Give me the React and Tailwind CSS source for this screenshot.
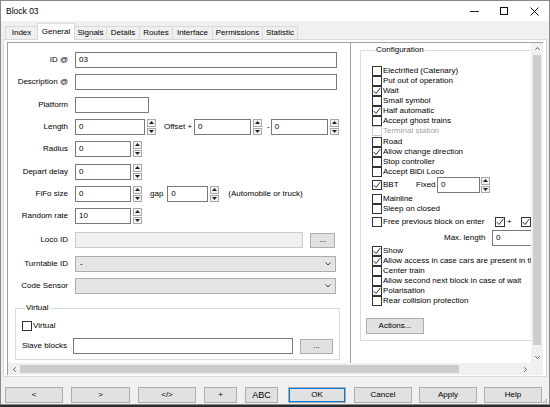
import React from "react";

function Check({ on = false, dis = false }) {
  return (
    <span
      className={
        "flex h-[10px] w-[10px] shrink-0 items-center justify-center border bg-white " +
        (dis ? "border-[#cccccc]" : "border-[#333333]")
      }
    >
      {on && (
        <svg width="8" height="8" viewBox="0 0 8 8">
          <path d="M0.8 4.1 L3 6.5 L7.2 1.1" fill="none" stroke="#1a1a1a" strokeWidth="0.9" />
        </svg>
      )}
    </span>
  );
}

function Spin({ className = "" }) {
  return (
    <div className={"flex h-[16px] w-[9px] shrink-0 flex-col gap-[1px] " + className}>
      <div className="flex flex-1 items-center justify-center border border-[#a8a8a8] bg-[#f3f3f3]">
        <svg width="5" height="3" viewBox="0 0 5 3">
          <path d="M0 3L2.5 0L5 3Z" fill="#1e1e1e" />
        </svg>
      </div>
      <div className="flex flex-1 items-center justify-center border border-[#a8a8a8] bg-[#f3f3f3]">
        <svg width="5" height="3" viewBox="0 0 5 3">
          <path d="M0 0L2.5 3L5 0Z" fill="#1e1e1e" />
        </svg>
      </div>
    </div>
  );
}

function Field({ className = "", value = "" }) {
  return (
    <div className={"flex h-[16px] shrink-0 items-center border border-[#7a7a7a] bg-white pl-[3px] " + className}>
      {value}
    </div>
  );
}

function Row({ label, className = "", children }) {
  return (
    <div className={"flex h-[16px] items-center " + className}>
      <div className="w-[60px] shrink-0 whitespace-nowrap text-right">{label}</div>
      <div className="ml-[7px] flex items-center">{children}</div>
    </div>
  );
}

function Chevron() {
  return (
    <svg width="6" height="4" viewBox="0 0 6 4">
      <path d="M0.5 0.5L3 3L5.5 0.5" fill="none" stroke="#333" strokeWidth="0.9" />
    </svg>
  );
}

function Combo({ value = "" }) {
  return (
    <div className="flex h-[16px] w-[261px] items-center justify-between border border-[#adadad] bg-[#e5e5e5] pl-[4px] pr-[4px]">
      <span>{value}</span>
      <Chevron />
    </div>
  );
}

function Btn({ className = "", children }) {
  return (
    <div className={"flex shrink-0 items-center justify-center border border-[#adadad] bg-[#e1e1e1] " + className}>
      {children}
    </div>
  );
}

function CRow({ on = false, dis = false, children, className = "" }) {
  return (
    <div className={"flex h-[10px] items-center whitespace-nowrap " + className}>
      <Check on={on} dis={dis} />
      <span className={"ml-[1px] " + (dis ? "text-[#a0a0a0]" : "")}>{children}</span>
    </div>
  );
}

function Tab({ className = "", active = false, children }) {
  return (
    <div
      className={
        "flex shrink-0 items-center justify-center border border-b-0 border-[#d9d9d9] " +
        (active ? "relative z-10 -mb-[1px] h-[17px] bg-white" : "h-[13px] bg-[#f0f0f0]") +
        " " +
        className
      }
    >
      {children}
    </div>
  );
}

export default function App() {
  return (
    <div className="h-[407px] w-[550px] overflow-hidden bg-[#2b2b2b] font-['Liberation_Sans',Arial,sans-serif] text-[8px] leading-[10px] text-black">
      <div className="flex h-[405px] w-[550px] flex-col border border-[#8a8a8a] bg-[#f0f0f0]">
        {/* Title bar */}
        <div className="flex h-[20px] shrink-0 items-center justify-between bg-white">
          <span className="pl-[5px] text-[8.5px]">Block 03</span>
          <div className="flex h-full">
            <div className="flex w-[30px] items-center justify-center">
              <svg width="9" height="1" viewBox="0 0 9 1">
                <rect width="9" height="1" fill="#222" />
              </svg>
            </div>
            <div className="flex w-[30px] items-center justify-center">
              <svg width="8" height="8" viewBox="0 0 8 8">
                <rect x="0.5" y="0.5" width="7" height="7" fill="none" stroke="#111" strokeWidth="1" />
              </svg>
            </div>
            <div className="flex w-[30px] items-center justify-center">
              <svg width="9" height="9" viewBox="0 0 9 9">
                <path d="M0.5 0.5L8.5 8.5M8.5 0.5L0.5 8.5" stroke="#111" strokeWidth="1" />
              </svg>
            </div>
          </div>
        </div>

        {/* Tabs */}
        <div className="flex h-[18px] shrink-0 items-end pl-[4px]">
          <Tab className="w-[33px]">Index</Tab>
          <Tab active className="-ml-[1px] w-[38px]">General</Tab>
          <Tab className="-ml-[1px] w-[33px]">Signals</Tab>
          <Tab className="-ml-[1px] w-[34px]">Details</Tab>
          <Tab className="-ml-[1px] w-[34px]">Routes</Tab>
          <Tab className="-ml-[1px] w-[41px]">Interface</Tab>
          <Tab className="-ml-[1px] w-[51px]">Permissions</Tab>
          <Tab className="-ml-[1px] w-[36px]">Statistic</Tab>
        </div>

        {/* Tab panel */}
        <div className="mx-[2px] flex h-[338px] shrink-0 flex-col border border-[#d9d9d9] bg-white px-[3px] pb-[1px] pt-[2px]">
          <div className="flex flex-1 flex-col border-l border-t border-[#a0a0a0]">
            <div className="flex h-[320px] shrink-0">
              {/* Scroll content */}
              <div className="flex flex-1 overflow-hidden">
                {/* Left panel */}
                <div className="flex w-[343px] shrink-0 flex-col border-r border-[#a0a0a0] pt-[9px]">
                  <Row label="ID @">
                    <Field className="w-[262px]" value="03" />
                  </Row>
                  <Row label="Description @" className="mt-[6px]">
                    <Field className="w-[262px]" />
                  </Row>
                  <Row label="Platform" className="mt-[7px]">
                    <Field className="w-[74px]" />
                  </Row>
                  <Row label="Length" className="mt-[6px]">
                    <Field className="w-[70px]" value="0" />
                    <Spin className="ml-[2px]" />
                    <span className="ml-[8px] whitespace-nowrap">Offset +</span>
                    <Field className="ml-[2px] w-[57px]" value="0" />
                    <Spin className="ml-[2px]" />
                    <span className="ml-[5px]">-</span>
                    <Field className="ml-[1px] w-[57px]" value="0" />
                    <Spin className="ml-[2px]" />
                  </Row>
                  <Row label="Radius" className="mt-[6px]">
                    <Field className="w-[56px]" value="0" />
                    <Spin className="ml-[2px]" />
                  </Row>
                  <Row label="Depart delay" className="mt-[7px]">
                    <Field className="w-[56px]" value="0" />
                    <Spin className="ml-[2px]" />
                  </Row>
                  <Row label="FiFo size" className="mt-[6px]">
                    <Field className="w-[56px]" value="0" />
                    <Spin className="ml-[2px]" />
                    <span className="ml-[8px]">gap</span>
                    <Field className="ml-[4px] w-[41px]" value="0" />
                    <Spin className="ml-[2px]" />
                    <span className="ml-[9px] whitespace-nowrap">(Automobile or truck)</span>
                  </Row>
                  <Row label="Random rate" className="mt-[6px]">
                    <Field className="w-[56px]" value="10" />
                    <Spin className="ml-[2px]" />
                  </Row>
                  <Row label="Loco ID" className="mt-[8px]">
                    <div className="h-[16px] w-[228px] border border-[#cccccc] bg-[#f0f0f0]" />
                    <Btn className="ml-[7px] h-[15px] w-[25px]">...</Btn>
                  </Row>
                  <Row label="Turntable ID" className="mt-[8px]">
                    <Combo value="-" />
                  </Row>
                  <Row label="Code Sensor" className="mt-[6px]">
                    <Combo />
                  </Row>
                  <fieldset className="ml-[7px] mt-[9px] w-[325px] border border-[#dcdcdc] pb-[5px] pl-[6px]">
                    <legend className="ml-[3px] px-[1px]">Virtual</legend>
                    <CRow className="mt-[8px]">Virtual</CRow>
                    <div className="mt-[7px] flex h-[16px] items-center">
                      <span className="w-[51px] shrink-0 whitespace-nowrap">Slave blocks</span>
                      <Field className="w-[220px]" />
                      <Btn className="ml-[7px] h-[15px] w-[33px]">...</Btn>
                    </div>
                  </fieldset>
                </div>

                {/* Right panel */}
                <div className="flex w-[220px] shrink-0 flex-col pl-[9px] pt-[2px]">
                  <fieldset className="w-[205px] border border-[#dcdcdc] pb-[6px] pl-[11px]">
                    <legend className="ml-[3px] px-[1px]">Configuration</legend>
                    <CRow className="mt-[11px]">Electrified (Catenary)</CRow>
                    <CRow>Put out of operation</CRow>
                    <CRow on>Wait</CRow>
                    <CRow>Small symbol</CRow>
                    <CRow on>Half automatic</CRow>
                    <CRow>Accept ghost trains</CRow>
                    <CRow dis>Terminal station</CRow>
                    <CRow className="mt-[1px]">Road</CRow>
                    <CRow on>Allow change direction</CRow>
                    <CRow>Stop controller</CRow>
                    <CRow>Accept BiDi Loco</CRow>
                    <div className="flex h-[16px] items-center whitespace-nowrap">
                      <Check on />
                      <span className="ml-[1px] w-[33px]">BBT</span>
                      <span className="w-[21px]">Fixed</span>
                      <Field className="w-[43px]" value="0" />
                      <Spin className="ml-[1px]" />
                    </div>
                    <CRow className="mt-[1px]">Mainline</CRow>
                    <CRow>Sleep on closed</CRow>
                    <div className="mt-[3px] flex h-[10px] items-center whitespace-nowrap">
                      <Check />
                      <span className="ml-[1px] w-[112px]">Free previous block on enter</span>
                      <Check on />
                      <span className="ml-[2px] w-[14px]">+</span>
                      <Check on />
                    </div>
                    <div className="mt-[3px] flex h-[16px] items-center whitespace-nowrap">
                      <span className="ml-[72px] w-[48px]">Max. length</span>
                      <Field className="w-[60px]" value="0" />
                    </div>
                    <CRow on>Show</CRow>
                    <CRow on>Allow access in case cars are present in the block</CRow>
                    <CRow>Center train</CRow>
                    <CRow>Allow second next block in case of wait</CRow>
                    <CRow on>Polarisation</CRow>
                    <CRow>Rear collision protection</CRow>
                    <Btn className="mt-[12px] h-[16px] w-[58px] -ml-[6px]">Actions...</Btn>
                  </fieldset>
                </div>
              </div>

              {/* Vertical scrollbar */}
              <div className="flex w-[12px] shrink-0 flex-col bg-[#f0f0f0]">
                <div className="flex h-[11px] items-center justify-center">
                  <svg width="5" height="3" viewBox="0 0 5 3">
                    <path d="M0.3 2.7L2.5 0.5L4.7 2.7" fill="none" stroke="#606060" strokeWidth="1" />
                  </svg>
                </div>
                <div className="mx-[2px] mt-[1px] h-[290px] bg-[#cdcdcd]" />
                <div className="flex-1" />
                <div className="flex h-[11px] items-center justify-center">
                  <svg width="5" height="3" viewBox="0 0 5 3">
                    <path d="M0.3 0.3L2.5 2.5L4.7 0.3" fill="none" stroke="#606060" strokeWidth="1" />
                  </svg>
                </div>
              </div>
            </div>

            {/* Horizontal scrollbar */}
            <div className="flex flex-1 bg-[#f0f0f0]">
              <div className="flex w-[12px] items-center justify-center">
                <svg width="3" height="5" viewBox="0 0 3 5">
                  <path d="M2.7 0.3L0.5 2.5L2.7 4.7" fill="none" stroke="#606060" strokeWidth="1" />
                </svg>
              </div>
              <div className="my-[2px] w-[439px] bg-[#cdcdcd]" />
              <div className="flex-1" />
              <div className="flex w-[12px] items-center justify-center">
                <svg width="3" height="5" viewBox="0 0 3 5">
                  <path d="M0.3 0.3L2.5 2.5L0.3 4.7" fill="none" stroke="#606060" strokeWidth="1" />
                </svg>
              </div>
              <div className="w-[12px]" />
            </div>
          </div>
        </div>

        {/* Buttons */}
        <div className="mt-[10px] flex h-[16px] shrink-0 items-center pl-[4px]">
          <Btn className="h-[16px] w-[58px]">&lt;</Btn>
          <Btn className="ml-[8px] h-[16px] w-[59px]">&gt;</Btn>
          <Btn className="ml-[8px] h-[16px] w-[58px]">&lt;/&gt;</Btn>
          <Btn className="ml-[8px] h-[16px] w-[33px]">+</Btn>
          <Btn className="ml-[8px] h-[16px] w-[33px] text-[9px]">ABC</Btn>
          <Btn className="ml-[10px] h-[16px] w-[58px] border-[#0078d7] shadow-[inset_0_0_0_1px_#0078d7]">OK</Btn>
          <Btn className="ml-[8px] h-[16px] w-[58px]">Cancel</Btn>
          <Btn className="ml-[7px] h-[16px] w-[58px]">Apply</Btn>
          <Btn className="ml-[7px] h-[16px] w-[58px]">Help</Btn>
          <svg className="ml-[1px] mt-[12px]" width="5" height="5" viewBox="0 0 5 5">
            <rect x="3" y="0" width="1" height="1" fill="#999" />
            <rect x="1.5" y="1.5" width="1" height="1" fill="#999" />
            <rect x="3" y="1.5" width="1" height="1" fill="#999" />
            <rect x="0" y="3" width="1" height="1" fill="#999" />
            <rect x="1.5" y="3" width="1" height="1" fill="#999" />
            <rect x="3" y="3" width="1" height="1" fill="#999" />
          </svg>
        </div>
      </div>
    </div>
  );
}
